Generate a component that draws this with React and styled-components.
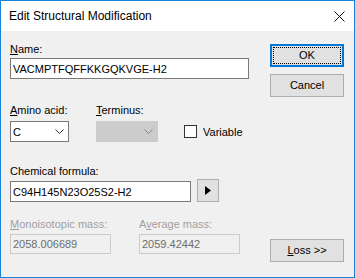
import React from "react";
import styled, { createGlobalStyle } from "styled-components";

const GlobalStyle = createGlobalStyle`
  html, body {
    margin: 0;
    padding: 0;
    background: #f0f0f0;
  }
  * {
    box-sizing: border-box;
  }
`;

const Window = styled.div`
  width: 355px;
  height: 278px;
  border: 1px solid #1883d7;
  background: #f0f0f0;
  font-family: "Liberation Sans", Arial, sans-serif;
  font-size: 11px;
  color: #000;
  display: flex;
  flex-direction: column;
  overflow: hidden;
`;

const TitleBar = styled.div`
  height: 30px;
  background: #fff;
  display: flex;
  align-items: center;
  justify-content: space-between;
  padding: 0 9px 0 8px;
`;

const Title = styled.div`
  font-size: 12px;
  color: #000;
  padding-bottom: 1px;
`;

const Body = styled.div`
  flex: 1;
  display: flex;
  padding: 12px 10px 0 9px;
`;

const FormColumn = styled.div`
  flex: 1;
  display: flex;
  flex-direction: column;
`;

const ButtonColumn = styled.div`
  width: 74px;
  display: flex;
  flex-direction: column;
  padding-top: 1px;
`;

const Row = styled.div`
  display: flex;
  align-items: flex-end;
  margin-top: ${(p) => p.$top || 0}px;
`;

const Field = styled.div`
  display: flex;
  flex-direction: column;
  width: ${(p) => (p.$width ? `${p.$width}px` : "auto")};
`;

const Label = styled.div`
  line-height: 13px;
  height: 13px;
  margin-bottom: ${(p) => p.$gap ?? 3}px;
  color: ${(p) => (p.$disabled ? "#a0a0a0" : "#000")};
  white-space: nowrap;

  u {
    text-decoration: underline;
    text-underline-offset: 1px;
  }
`;

const TextBox = styled.div`
  width: ${(p) => p.$width}px;
  height: ${(p) => p.$height || 21}px;
  border: 1px solid ${(p) => (p.$disabled ? "#cccccc" : "#7a7a7a")};
  background: ${(p) => (p.$disabled ? "#f0f0f0" : "#fff")};
  color: ${(p) => (p.$disabled ? "#6d6d6d" : "#000")};
  display: flex;
  align-items: center;
  padding-left: 2px;
  white-space: nowrap;
  overflow: hidden;
`;

const Combo = styled.div`
  width: ${(p) => p.$width}px;
  height: 21px;
  border: 1px solid ${(p) => (p.$disabled ? "#cccccc" : "#7a7a7a")};
  background: ${(p) => (p.$disabled ? "#cccccc" : "#fff")};
  display: flex;
  align-items: center;
  justify-content: space-between;
  padding: 0 4px 0 2px;
`;

const CheckWrap = styled.label`
  display: flex;
  align-items: center;
  margin-left: 26px;
  margin-bottom: 3px;
  height: 15px;
`;

const CheckBox = styled.span`
  width: 13px;
  height: 13px;
  border: 1px solid #333;
  background: #fff;
  margin-right: 6px;
`;

const Button = styled.div`
  width: ${(p) => p.$width || 74}px;
  height: ${(p) => p.$height || 23}px;
  margin-top: ${(p) => p.$top || 0}px;
  margin-left: ${(p) => p.$left || 0}px;
  background: #e1e1e1;
  border: ${(p) => (p.$default ? "2px solid #0078d7" : "1px solid #adadad")};
  display: flex;
  align-items: center;
  justify-content: center;
  position: relative;
  padding-bottom: 1px;
`;

const FocusRect = styled.span`
  position: absolute;
  inset: 1px;
  border: 1px dotted #000;
`;

const Chevron = ({ color }) => (
  <svg width="9" height="5" viewBox="0 0 9 5">
    <polyline points="0.5,0.5 4.5,4.5 8.5,0.5" fill="none" stroke={color} strokeWidth="1" />
  </svg>
);

const CloseIcon = () => (
  <svg width="11" height="11" viewBox="0 0 11 11">
    <path d="M0.5 0.5 L10.5 10.5 M10.5 0.5 L0.5 10.5" stroke="#111" strokeWidth="1" />
  </svg>
);

const PlayIcon = () => (
  <svg width="6" height="9" viewBox="0 0 6 9">
    <polygon points="0,0 6,4.5 0,9" fill="#000" />
  </svg>
);

export default function App() {
  return (
    <>
      <GlobalStyle />
      <Window>
        <TitleBar>
          <Title>Edit Structural Modification</Title>
          <CloseIcon />
        </TitleBar>
        <Body>
          <FormColumn>
            <Field>
              <Label $gap={2}>
                <u>N</u>ame:
              </Label>
              <TextBox $width={239}>VACMPTFQFFKKGQKVGE-H2</TextBox>
            </Field>

            <Row $top={25}>
              <Field $width={86}>
                <Label $gap={4}>
                  <u>A</u>mino acid:
                </Label>
                <Combo $width={59}>
                  <span>C</span>
                  <Chevron color="#333" />
                </Combo>
              </Field>
              <Field $width={62}>
                <Label $gap={4}>
                  <u>T</u>erminus:
                </Label>
                <Combo $width={62} $disabled>
                  <span />
                  <Chevron color="#888" />
                </Combo>
              </Field>
              <CheckWrap>
                <CheckBox />
                Variable
              </CheckWrap>
            </Row>

            <Row $top={23}>
              <Field>
                <Label>Chemical formula:</Label>
                <TextBox $width={181}>C94H145N23O25S2-H2</TextBox>
              </Field>
              <Button $width={22} $height={23} $left={6}>
                <PlayIcon />
              </Button>
            </Row>

            <Row $top={16}>
              <Field $width={129}>
                <Label $disabled>
                  <u>M</u>onoisotopic mass:
                </Label>
                <TextBox $width={101} $height={20} $disabled>
                  2058.006689
                </TextBox>
              </Field>
              <Field $width={101}>
                <Label $disabled>
                  A<u>v</u>erage mass:
                </Label>
                <TextBox $width={101} $height={20} $disabled>
                  2059.42442
                </TextBox>
              </Field>
            </Row>
          </FormColumn>

          <ButtonColumn>
            <Button $default>
              <FocusRect />
              OK
            </Button>
            <Button $top={7}>Cancel</Button>
            <Button $top={142}>
              <span>
                <u>L</u>oss &gt;&gt;
              </span>
            </Button>
          </ButtonColumn>
        </Body>
      </Window>
    </>
  );
}
